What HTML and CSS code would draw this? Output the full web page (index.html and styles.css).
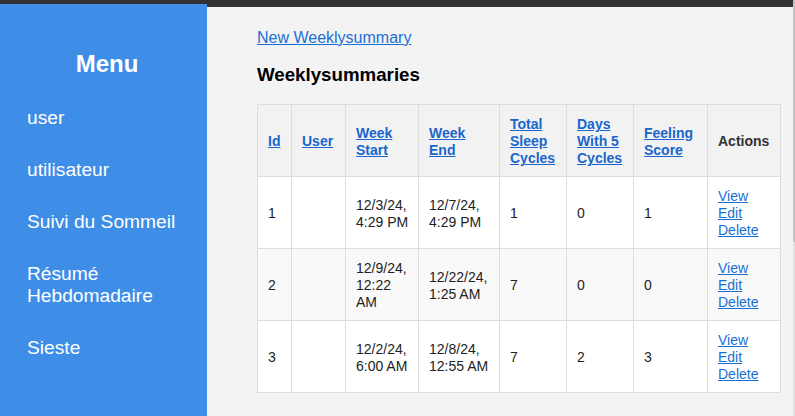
FILE: index.html
```html
<!DOCTYPE html>
<html lang="fr">
<head>
<meta charset="utf-8">
<title>Weeklysummaries</title>
<link rel="stylesheet" href="styles.css">
</head>
<body>
<div class="app">
  <nav class="sidebar">
    <h2 class="sidebar-title">Menu</h2>
    <ul class="nav-list">
      <li><a class="nav-link" href="#">user</a></li>
      <li><a class="nav-link" href="#">utilisateur</a></li>
      <li><a class="nav-link" href="#">Suivi du Sommeil</a></li>
      <li><a class="nav-link" href="#">Résumé Hebdomadaire</a></li>
      <li><a class="nav-link" href="#">Sieste</a></li>
    </ul>
  </nav>
  <main class="content">
    <p class="new-wrap"><a class="link" href="#">New Weeklysummary</a></p>
    <h3 class="page-title">Weeklysummaries</h3>
    <table class="data-table">
      <colgroup>
        <col class="col-id">
        <col class="col-user">
        <col class="col-start">
        <col class="col-end">
        <col class="col-total">
        <col class="col-days">
        <col class="col-feel">
        <col class="col-actions">
      </colgroup>
      <thead>
        <tr>
          <th><a class="th-link" href="#">Id</a></th>
          <th><a class="th-link" href="#">User</a></th>
          <th><a class="th-link" href="#">Week Start</a></th>
          <th><a class="th-link" href="#">Week End</a></th>
          <th><a class="th-link" href="#">Total Sleep Cycles</a></th>
          <th><a class="th-link" href="#">Days With 5 Cycles</a></th>
          <th><a class="th-link" href="#">Feeling Score</a></th>
          <th>Actions</th>
        </tr>
      </thead>
      <tbody>
        <tr>
          <td>1</td>
          <td></td>
          <td>12/3/24, 4:29 PM</td>
          <td>12/7/24, 4:29 PM</td>
          <td>1</td>
          <td>0</td>
          <td>1</td>
          <td><a class="link" href="#">View</a> <a class="link" href="#">Edit</a> <a class="link" href="#">Delete</a></td>
        </tr>
        <tr>
          <td>2</td>
          <td></td>
          <td>12/9/24, 12:22 AM</td>
          <td>12/22/24, 1:25 AM</td>
          <td>7</td>
          <td>0</td>
          <td>0</td>
          <td><a class="link" href="#">View</a> <a class="link" href="#">Edit</a> <a class="link" href="#">Delete</a></td>
        </tr>
        <tr>
          <td>3</td>
          <td></td>
          <td>12/2/24, 6:00 AM</td>
          <td>12/8/24, 12:55 AM</td>
          <td>7</td>
          <td>2</td>
          <td>3</td>
          <td><a class="link" href="#">View</a> <a class="link" href="#">Edit</a> <a class="link" href="#">Delete</a></td>
        </tr>
      </tbody>
    </table>
  </main>
</div>
<div class="scrollbar"><div class="scrollbar-thumb"></div></div>
</body>
</html>
```
FILE: styles.css
```css
html, body {
  margin: 0;
  height: 100%;
  overflow: hidden;
}

body {
  background: #323232;
  font-family: "Liberation Sans", Arial, sans-serif;
  color: #222;
}

.app {
  display: flex;
  min-height: 100vh;
}

.sidebar {
  flex: none;
  width: 207px;
  box-sizing: border-box;
  margin-top: 4px;
  padding: 0 20px 0 27px;
  background: #3e8ee8;
  color: #fff;
}

.sidebar-title {
  margin: 46px 0 14px;
  font-size: 24px;
  font-weight: bold;
  text-align: center;
}

.nav-list {
  list-style: none;
  margin: 0;
  padding: 0;
}

.nav-link {
  display: block;
  padding: 15px 0;
  font-size: 19.2px;
  color: #fff;
  text-decoration: none;
}

.content {
  flex: 1;
  margin-top: 7px;
  padding: 22px 50px 20px;
  background: #f3f3f3;
}

.new-wrap {
  margin: 0;
  font-size: 16px;
}

.link {
  color: #1a6fd6;
  text-decoration: underline;
}

.page-title {
  margin: 16.72px 0 18.72px;
  font-size: 18.72px;
  font-weight: bold;
  color: #000;
}

.data-table {
  border-collapse: collapse;
  table-layout: fixed;
  width: 523px;
  font-size: 14px;
  line-height: 17px;
  background: #fff;
}

.col-id { width: 34px; }
.col-user { width: 54px; }
.col-start { width: 73px; }
.col-end { width: 81px; }
.col-total { width: 67px; }
.col-days { width: 67px; }
.col-feel { width: 74px; }
.col-actions { width: 73px; }

.data-table th,
.data-table td {
  border: 1px solid #dddddd;
  padding: 11px 8px 9px 10px;
  text-align: left;
  vertical-align: middle;
}

.data-table th {
  background: #f2f2f2;
  font-weight: bold;
  color: #333;
}

.th-link {
  color: #1a66cc;
  text-decoration: underline;
}

.data-table tbody tr:nth-child(even) td {
  background: #f9f9f9;
}

.scrollbar {
  position: fixed;
  top: 0;
  right: 0;
  width: 2px;
  height: 100%;
  background: #e2e2e2;
}

.scrollbar-thumb {
  height: 242px;
  background: #c4c4c4;
}
```
